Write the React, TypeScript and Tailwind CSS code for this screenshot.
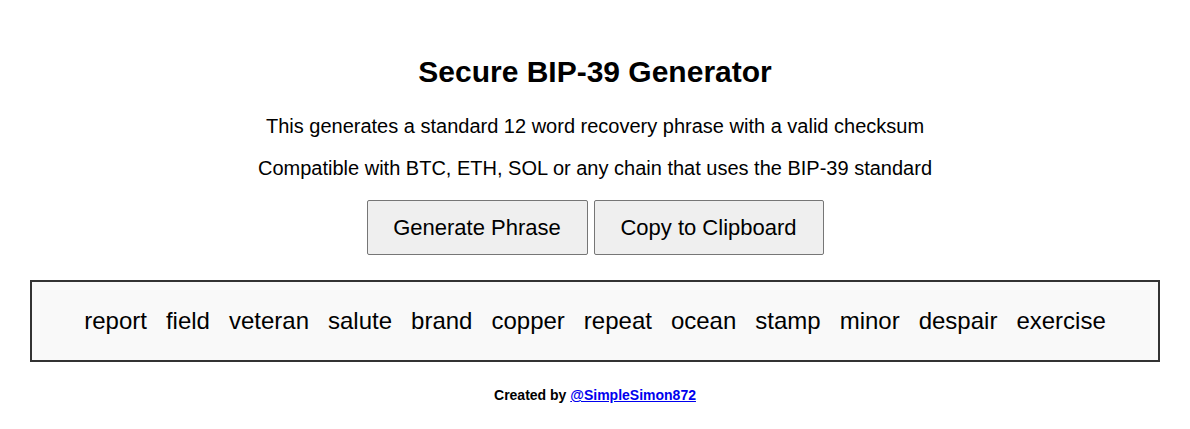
import React from "react";

const words = ["report", "field", "veteran", "salute", "brand", "copper", "repeat", "ocean", "stamp", "minor", "despair", "exercise"];

export default function App() {
  return (
    <div className="min-h-[429px] w-full bg-white text-black font-['Liberation_Sans',Arial,sans-serif]">
      <div className="flex flex-col items-center px-[30px] pt-[55px]">
        <h1 className="text-[30px] font-bold leading-[34px]">Secure BIP-39 Generator</h1>
        <p className="mt-[26px] text-[20px] leading-[23px]">
          This generates a standard 12 word recovery phrase with a valid checksum
        </p>
        <p className="mt-[19px] text-[20px] leading-[23px]">
          Compatible with BTC, ETH, SOL or any chain that uses the BIP-39 standard
        </p>
        <div className="mt-[20px] flex gap-[6px]">
          <button className="flex h-[55px] w-[221px] items-center justify-center rounded-[2px] border border-[#767676] bg-[#efefef] text-[22px]">
            Generate Phrase
          </button>
          <button className="flex h-[55px] w-[230px] items-center justify-center rounded-[2px] border border-[#767676] bg-[#efefef] text-[22px]">
            Copy to Clipboard
          </button>
        </div>
        <div className="mt-[25px] flex h-[82px] w-full items-center justify-center gap-[19px] border-2 border-[#333333] bg-[#f9f9f9] text-[24px]">
          {words.map((w) => (
            <span key={w}>{w}</span>
          ))}
        </div>
        <p className="mt-[25px] text-[14px] font-bold leading-[16px]">
          Created by{" "}
          <a href="#" className="text-[#0000ee] underline">
            @SimpleSimon872
          </a>
        </p>
      </div>
    </div>
  );
}
